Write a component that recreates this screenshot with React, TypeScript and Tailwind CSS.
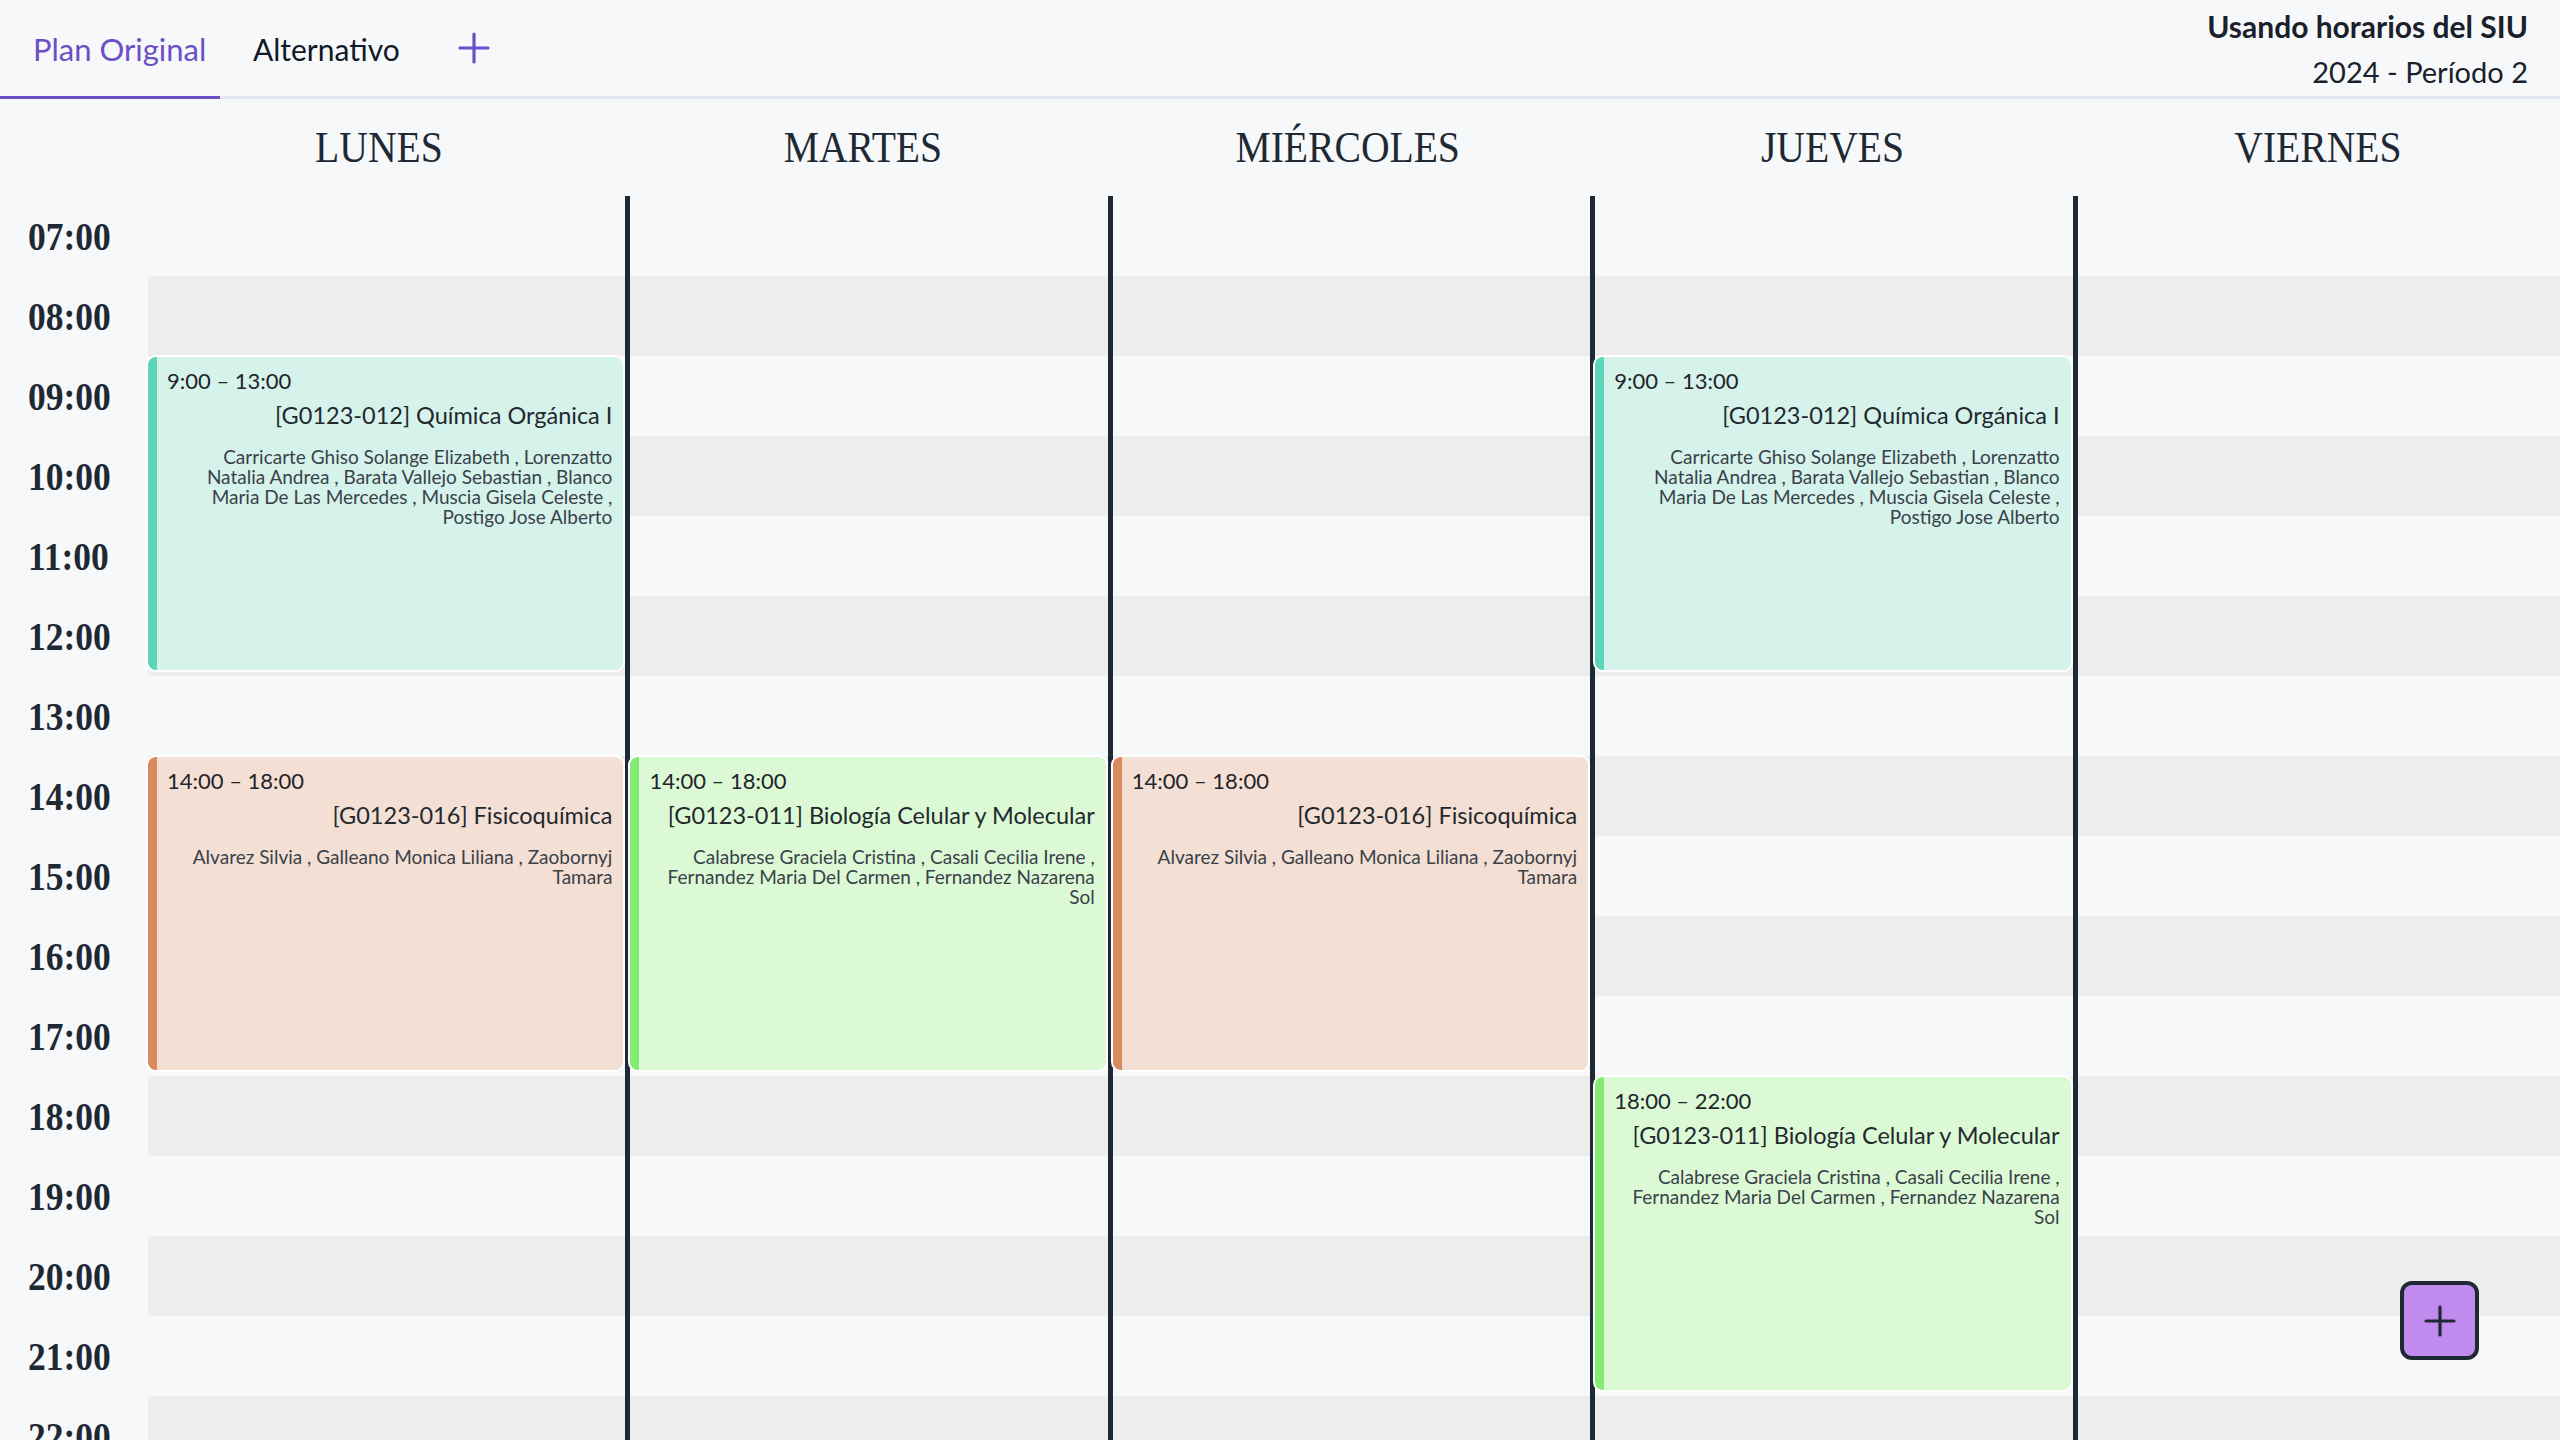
import React from 'react';

type Tone = 'teal' | 'orange' | 'green';

interface CalendarEvent {
  id: string;
  time: string;
  title: string;
  profs: string;
  tone: Tone;
  place: string;
}

const tones: Record<Tone, string> = {
  teal: 'bg-[#d5f3eb] border-l-[#5dd5b9]',
  orange: 'bg-[#f3dfd4] border-l-[#d98a5e]',
  green: 'bg-[#dcf9d6] border-l-[#84ec74]',
};

const days = ['LUNES', 'MARTES', 'MIÉRCOLES', 'JUEVES', 'VIERNES'];

const hours = [
  { label: '07:00', row: 'row-start-1' },
  { label: '08:00', row: 'row-start-2' },
  { label: '09:00', row: 'row-start-3' },
  { label: '10:00', row: 'row-start-4' },
  { label: '11:00', row: 'row-start-5' },
  { label: '12:00', row: 'row-start-6' },
  { label: '13:00', row: 'row-start-7' },
  { label: '14:00', row: 'row-start-8' },
  { label: '15:00', row: 'row-start-9' },
  { label: '16:00', row: 'row-start-10' },
  { label: '17:00', row: 'row-start-11' },
  { label: '18:00', row: 'row-start-12' },
  { label: '19:00', row: 'row-start-13' },
  { label: '20:00', row: 'row-start-14' },
  { label: '21:00', row: 'row-start-15' },
  { label: '22:00', row: 'row-start-16' },
];

// filas pares (08, 10, 12...) van en gris
const bands = ['row-start-2', 'row-start-4', 'row-start-6', 'row-start-8', 'row-start-10', 'row-start-12', 'row-start-14', 'row-start-16'];

// separador a la derecha de lunes..jueves
const dividers = ['col-start-2', 'col-start-3', 'col-start-4', 'col-start-5'];

const QUIMICA_PROFS =
  'Carricarte Ghiso Solange Elizabeth , Lorenzatto Natalia Andrea , Barata Vallejo Sebastian , Blanco Maria De Las Mercedes , Muscia Gisela Celeste , Postigo Jose Alberto';
const FISICO_PROFS = 'Alvarez Silvia , Galleano Monica Liliana , Zaobornyj Tamara';
const BIO_PROFS =
  'Calabrese Graciela Cristina , Casali Cecilia Irene , Fernandez Maria Del Carmen , Fernandez Nazarena Sol';

const events: CalendarEvent[] = [
  { id: 'q-lun', time: '9:00 – 13:00', title: '[G0123-012] Química Orgánica I', profs: QUIMICA_PROFS, tone: 'teal', place: 'col-start-2 row-start-3 row-span-4' },
  { id: 'q-jue', time: '9:00 – 13:00', title: '[G0123-012] Química Orgánica I', profs: QUIMICA_PROFS, tone: 'teal', place: 'col-start-5 row-start-3 row-span-4' },
  { id: 'f-lun', time: '14:00 – 18:00', title: '[G0123-016] Fisicoquímica', profs: FISICO_PROFS, tone: 'orange', place: 'col-start-2 row-start-8 row-span-4' },
  { id: 'b-mar', time: '14:00 – 18:00', title: '[G0123-011] Biología Celular y Molecular', profs: BIO_PROFS, tone: 'green', place: 'col-start-3 row-start-8 row-span-4' },
  { id: 'f-mie', time: '14:00 – 18:00', title: '[G0123-016] Fisicoquímica', profs: FISICO_PROFS, tone: 'orange', place: 'col-start-4 row-start-8 row-span-4' },
  { id: 'b-jue', time: '18:00 – 22:00', title: '[G0123-011] Biología Celular y Molecular', profs: BIO_PROFS, tone: 'green', place: 'col-start-5 row-start-12 row-span-4' },
];

const PlusIcon = ({ className }: { className?: string }) => (
  <svg viewBox="0 0 32 32" className={className} fill="none" stroke="currentColor" strokeLinecap="round">
    <path d="M16 2v28M2 16h28" strokeWidth={3.2} />
  </svg>
);

const EventCard = ({ ev }: { ev: CalendarEvent }) => (
  <div className={`${ev.place} mt-[1px] mb-[6px] mr-[7px] rounded-lg border-l-[9px] ring-2 ring-white pl-[10px] pr-[11px] pt-[11px] overflow-hidden ${tones[ev.tone]}`}>
    <p className="text-[22px] leading-[26px] text-[#1f2429]">{ev.time}</p>
    <p className="mt-[6px] text-right text-[23.5px] leading-[30px] text-[#23282d]">{ev.title}</p>
    <p className="mt-[17px] text-right text-[19px] leading-[20px] text-[#3a4149]">{ev.profs}</p>
  </div>
);

export default function App() {
  return (
    <div className="h-screen overflow-hidden flex flex-col bg-[#f7f8fa] font-['Lato','Noto_Sans',sans-serif] text-[#1d2530]">
      {/* Tabs + info del período */}
      <header className="flex justify-between h-[99px] shrink-0 border-b-[3px] border-[#e2e8f0]">
        <nav className="flex items-stretch">
          <button className="w-[220px] pl-[33px] pt-[2px] text-left text-[31px] text-[#6c4fc6] border-b-[3px] border-[#6c4fc6] -mb-[3px]">
            Plan Original
          </button>
          <button className="pl-[33px] pr-[16px] pt-[2px] text-left text-[30px] text-[#111827]">Alternativo</button>
          <button className="ml-[42px] text-[#6c4fc6]">
            <PlusIcon className="w-[32px] h-[32px]" />
          </button>
        </nav>
        <div className="flex flex-col items-end pr-[32px] pt-[6px] text-[#1a202c]">
          <span className="text-[30px] leading-[40px] font-bold">Usando horarios del SIU</span>
          <span className="text-[29px] leading-[40px] mt-[6px]">2024 - Período 2</span>
        </div>
      </header>

      <div className="flex-1 overflow-hidden">
        {/* Encabezado de días */}
        <div className="grid grid-cols-[136px_repeat(5,minmax(0,1fr))] h-[97px]">
          <div />
          {days.map(d => (
            <div key={d} className="flex items-center justify-center">
              <span className="inline-block scale-x-[0.9] font-['Liberation_Serif','Times_New_Roman',serif] text-[44px] leading-none text-[#1f2933]">
                {d}
              </span>
            </div>
          ))}
        </div>

        {/* Grilla horaria */}
        <div className="grid grid-cols-[148px_repeat(5,minmax(0,1fr))] grid-rows-[repeat(16,80px)]">
          {bands.map(r => (
            <div key={r} className={`${r} col-start-2 col-span-5 bg-[#ededed]`} />
          ))}
          {hours.map(h => (
            <div key={h.label} className={`${h.row} col-start-1 flex items-center pl-[28px]`}>
              <span className="inline-block origin-left scale-x-[0.91] font-['Liberation_Serif','Times_New_Roman',serif] font-bold text-[39px] leading-none text-[#1f2933]">
                {h.label}
              </span>
            </div>
          ))}
          {dividers.map(c => (
            <div key={c} className={`${c} row-start-1 row-span-16 justify-self-end w-[5px] bg-[#1f2933]`} />
          ))}
          {events.map(ev => (
            <EventCard key={ev.id} ev={ev} />
          ))}
        </div>
      </div>

      {/* Botón flotante */}
      <button className="fixed left-[2400px] top-[1281px] w-[79px] h-[79px] flex items-center justify-center rounded-[12px] border-[4px] border-[#1f2933] bg-[#c18aee] text-[#1f2933]">
        <PlusIcon className="w-[32px] h-[32px]" />
      </button>
    </div>
  );
}
